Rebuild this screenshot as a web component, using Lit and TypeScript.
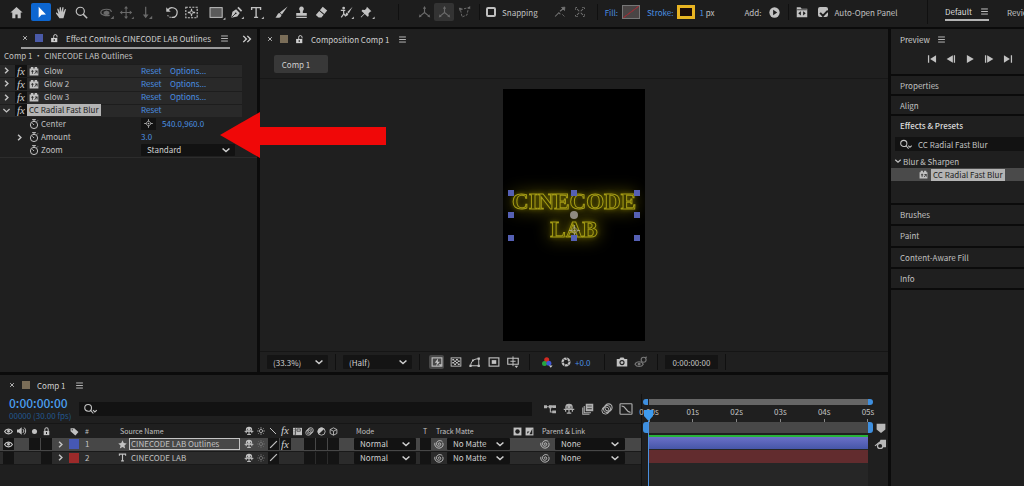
import { LitElement, html, svg, css } from "lit";
import { customElement, state } from "lit/decorators.js";

const glyphs: Record<string, unknown> = {
  home: svg`<path d="M8 2 1.5 8h2v6h3.3v-4h2.4v4h3.3V8h2z" fill="currentColor"/>`,
  arrow: svg`<path d="M4.5 1v13.500l3.500-3.700 5.500-.3z" fill="currentColor"/>`,
  hand: svg`<path d="M5.500 15 1.300 9.200c-.5-.9.600-1.600 1.300-.9l1.600 1.500L2.800 4c-.1-1 1.200-1.200 1.500-.2l1.300 4L5.700 2c0-1.100 1.500-1.100 1.600 0L7.900 7.500l1.100-5.500c.2-1 1.600-.8 1.500.2l-.4 5.700 1.900-3.700c.5-.9 1.700-.4 1.400.5l-1.700 5.900-1.300 4.400z" fill="currentColor"/>`,
  zoom: svg`<circle cx="6.500" cy="6.500" r="5" fill="none" stroke="currentColor" stroke-width="1.400"/><path d="m10 10 5 5" stroke="currentColor" stroke-width="1.800"/>`,
  orbit: svg`<path d="M12 11.500c-5 1-11-.6-11-3.500 0-2.500 3.500-4 7-4s6 1.500 6 3.500" fill="none" stroke="currentColor" stroke-width="1.500"/><path d="M4.500 7 8 5.500 11.500 7v3L8 11.500 4.500 10z" fill="currentColor"/><path d="m17 12v4h-4z" fill="currentColor"/>`,
  move: svg`<path d="M7.500 2v12M1.500 8h12" stroke="currentColor" stroke-width="1.300"/><path d="M7.500 0 10 3.200H5zM7.500 16 5 12.800h5zM-.3 8l3-2.400v4.800zM15 8l-3-2.400v4.800zM17 13v3h-3z" fill="currentColor"/>`,
  dolly: svg`<path d="M7 1v11" stroke="currentColor" stroke-width="1.500"/><path d="m7 15-3.500-4.500h7zM15 12v4h-4z" fill="currentColor"/>`,
  rotate: svg`<path d="M3.500 5.500A6 6 0 1 1 8 14" fill="none" stroke="currentColor" stroke-width="1.500"/><path d="M7 14a6 6 0 0 1-4.500-4" fill="none" stroke="currentColor" stroke-width="1.300" stroke-dasharray="1.500 1.500"/><path d="M1.500 1.500v5.500H7z" fill="currentColor"/>`,
  anchor: svg`<rect x="1" y="1.500" width="14" height="13" fill="none" stroke="currentColor" stroke-width="1.400" stroke-dasharray="2.500 1.500"/><circle cx="8" cy="8" r="2" fill="none" stroke="currentColor"/><path d="M8 3.500v3M8 9.500v3M3.500 8h3M9.500 8h3" stroke="currentColor" stroke-width="1.600"/>`,
  rect: svg`<rect x="0" y="2" width="15" height="12" fill="#5a5a5a" stroke="currentColor" stroke-width="1.200"/><path d="M19 14v3h-3z" fill="currentColor"/>`,
  pen: svg`<path d="M1.500 14.500 3 7l4.500-3 4.500 4.500L9 13z" fill="currentColor"/><path d="m9 2.500 1.500-1.500 4.500 4.500L13.500 7z" fill="currentColor"/><path d="m2 14 4.500-4.500" stroke="#1d1d1d"/><circle cx="7" cy="9" r="1.100" fill="#1d1d1d"/><path d="M17 13v3h-3z" fill="currentColor"/>`,
  type: svg`<path d="M2 5V2h11v3M7.500 2v12M5 14h5" fill="none" stroke="currentColor" stroke-width="1.700"/><path d="M17 13v3h-3z" fill="currentColor"/>`,
  textLayer: svg`<path d="M2.500 5V2h11v3M8 2v12M5.500 14h5" fill="none" stroke="currentColor" stroke-width="2"/>`,
  brush: svg`<path d="M15.500.5 6 8l2.500 2.500zM5.500 8.500C2.500 8.500 3.500 12 .5 14c3.500 1 7 .5 7.500-3z" fill="currentColor"/>`,
  stamp: svg`<path d="M8 .5a3 3 0 0 1 2.500 4.500C9.500 6.500 9.500 7.500 9.700 8.500h4.800V12h-13V8.500h4.800C6.500 7.500 6.500 6.500 5.500 5A3 3 0 0 1 8 .5zM1.500 13.300h13v1.400h-13z" fill="currentColor"/>`,
  eraser: svg`<path d="m9.500 1 5.500 4.500-3.500 4.200L6 5.200zM5.200 6.200l5.500 4.500-2.800 3.500H4.500L1 11z" fill="currentColor"/>`,
  roto: svg`<circle cx="4.500" cy="2.500" r="1.700" fill="currentColor"/><path d="M1 5.500h5.500M4.500 5v5l-3 4M5 9.500 7 13" stroke="currentColor" stroke-width="1.500" fill="none"/><path d="M15.500 1 9 7.500l1.700 1.700zM8.500 8c-1.500.5-1.500 3-3 4 2 .5 4.500 0 4.700-2.300zM17 13v3h-3z" fill="currentColor"/>`,
  pin: svg`<path d="m8.500 1 5.500 5.500-1.500.7-2 2 .2 3-1.300 1L5.800 9.800l-4.300 4.400-.7-.7 4.400-4.300L1.800 6l1.200-1.300 3 .2 2-2zM18 13v3h-3z" fill="currentColor"/>`,
  axis: svg`<path d="M8 8V2M8 8l-5.500 4.500M8 8l5.500 4.500" stroke="currentColor" stroke-width="1.400"/><path d="M8 0 6 3.500h4zM1 14l1-4 2.500 3zM15 14l-1-4-2.500 3z" fill="currentColor"/>`,
  axisView: svg`<path d="M3 4.500 13 2l-2 9-6 2.500z" fill="none" stroke="currentColor" stroke-width="1.200" stroke-dasharray="3 1.500"/><path d="m1 2 4 .5L2 6zM15 0v4l-3-2z" fill="currentColor"/>`,
  snapEdge: svg`<path d="m1.500 14 5-5 2 2M8 7l5-4" stroke="currentColor" stroke-width="1.400" fill="none"/><path d="M14.500 1.500 14 6l-4-4zM11 11l3 3" fill="currentColor" stroke="currentColor"/>`,
  snapBox: svg`<path d="M2 5V2h3M11 2h3v3M14 11v3h-3M5 14H2v-3" fill="none" stroke="currentColor" stroke-width="1.200" stroke-dasharray="2 1"/><path d="m4 4 3 3m2 2 3 3m0-8L9 7m-2 2-3 3" stroke="currentColor" stroke-width="1.400"/>`,
  add: svg`<circle cx="8" cy="8" r="7.500" fill="currentColor"/><path d="M6 4v8l6-4z" fill="#1d1d1d"/>`,
  folder: svg`<path d="M1 1.500h5L7.500 3.500H15V15H1z" fill="currentColor"/><path d="M1.500 5h13" stroke="#1d1d1d"/><path d="M6.500 7v5.500L3 9.800zM9.500 7v5.500L13 9.800z" fill="#1d1d1d"/>`,
  lock: svg`<path d="M3 7h10v7.500H3z" fill="currentColor"/><path d="M5 7V4.500a3 3 0 0 1 6 0V7" fill="none" stroke="currentColor" stroke-width="1.800"/><path d="M8 9v3.500" stroke="#1f1f1f" stroke-width="1.800"/>`,
  unlock: svg`<path d="M2 7h11v7.500H2z" fill="currentColor"/><path d="M6.500 7V4a3 3 0 0 1 6 0v2" fill="none" stroke="currentColor" stroke-width="1.700"/><path d="M7.500 9v3.500" stroke="#1f1f1f" stroke-width="1.800"/>`,
  menu: svg`<path d="M2 3.500h12M2 8h12M2 12.500h12" stroke="currentColor" stroke-width="1.500"/>`,
  close: svg`<path d="m3 3 10 10M13 3 3 13" stroke="currentColor" stroke-width="2.200"/>`,
  more: svg`<path d="m2 3 5 5-5 5M8.500 3l5 5-5 5" fill="none" stroke="currentColor" stroke-width="2.200"/>`,
  right: svg`<path d="m5.500 3 5 5-5 5" fill="none" stroke="currentColor" stroke-width="2.600"/>`,
  down: svg`<path d="m2.500 5.500 5.500 5 5.500-5" fill="none" stroke="currentColor" stroke-width="2.400"/>`,
  preset: svg`<path d="M1 4h2V1.500h4V4h2V1.500h4V4h2v11H1z" fill="currentColor"/><path d="M3.500 8.500h4M5.500 6.500v6M9 12.500l4-5M9.500 8h3.500v4" stroke="#262626" stroke-width="1.300" fill="none"/>`,
  watch: svg`<circle cx="8" cy="9.500" r="5.800" fill="none" stroke="currentColor" stroke-width="1.600"/><path d="M5 1h6M8 1v3M8 9.500 5.500 7M12.500 4 14 2.500" stroke="currentColor" stroke-width="1.600"/>`,
  target: svg`<path d="m8 3 5 5-5 5-5-5z" fill="none" stroke="currentColor" stroke-width="1.300"/><circle cx="8" cy="8" r="1.500" fill="currentColor"/><path d="M8 0v5M8 11v5M0 8h5M11 8h5" stroke="currentColor" stroke-width="1.200"/>`,
  search: svg`<circle cx="5.500" cy="6.500" r="4.500" fill="none" stroke="currentColor" stroke-width="1.500"/><path d="m8.500 9.500 4 4.500M12 9.500l2.500 2.500L17 9.500" fill="none" stroke="currentColor" stroke-width="1.500"/>`,
  first: svg`<path d="M2.500 2v12" stroke="currentColor" stroke-width="2"/><path d="M14.500 2v12L5 8z" fill="currentColor"/>`,
  back: svg`<path d="M13.500 2v12" stroke="currentColor" stroke-width="2"/><path d="M11 2v12L1 8z" fill="currentColor"/>`,
  play: svg`<path d="M3 1.500v13L14 8z" fill="currentColor"/>`,
  next: svg`<path d="M2.500 2v12" stroke="currentColor" stroke-width="2"/><path d="M5 2v12l10-6z" fill="currentColor"/>`,
  last: svg`<path d="M13.500 2v12" stroke="currentColor" stroke-width="2"/><path d="M1.500 2v12L11 8z" fill="currentColor"/>`,
  fast: svg`<rect x="1.500" y="2.500" width="13" height="11" fill="none" stroke="currentColor" stroke-width="1.500"/><path d="M9.500 3 5 9h3l-1.500 4.500L12 7.500H9z" fill="currentColor"/><path d="m10 11 2.500 2.500L15 11z" fill="currentColor"/>`,
  checker: svg`<rect x="1.500" y="2.500" width="13" height="11" fill="none" stroke="currentColor" stroke-width="1.200"/><path d="M3 4h2.500v2H3zM8 4h2.500v2H8zM5.500 6H8v2H5.500zM10.500 6H13v2h-2.500zM3 8h2.500v2H3zM8 8h2.500v2H8zM5.500 10H8v2H5.500zM10.500 10H13v2h-2.500z" fill="currentColor"/>`,
  mask: svg`<path d="M2 13C3 8 5 4 13 3.500V13z" fill="none" stroke="currentColor" stroke-width="1.300"/><path d="M.5 11.500h3v3h-3zM11.500 2h3v3h-3zM11.500 11.500h3v3h-3zM4 4.500h2.500V7H4z" fill="currentColor"/>`,
  region: svg`<rect x="1.500" y="2.500" width="13" height="11" fill="none" stroke="currentColor" stroke-width="1.500"/><path d="M5 5.500h6v5H5z" fill="currentColor"/>`,
  guides: svg`<path d="M1 3h14v8H1z" fill="none" stroke="currentColor" stroke-width="1.500"/><path d="M8 .5v13M4.500 7h7" stroke="currentColor" stroke-width="1.300"/><path d="M10 13h5l-2.500 3z" fill="currentColor"/>`,
  rgb: svg`<circle cx="7.500" cy="4.500" r="4" fill="#d22a22"/><circle cx="4" cy="10.500" r="4" fill="#27a540"/><circle cx="11" cy="10" r="4" fill="#3f55d8"/><path d="M11 13.500h6L14 17z" fill="#ccc"/>`,
  aperture: svg`<circle cx="8" cy="8" r="5.500" fill="none" stroke="currentColor" stroke-width="3.500"/><path d="m8 0 2.500 5M15.500 6l-5 2.500M13 14l-3.500-3.500M5 15.500 6.500 10.500M.5 9.500 5.500 8M3 2.500l4 3" stroke="#1f1f1f" stroke-width="1.100"/>`,
  camera: svg`<path d="M1 4h3.500L6 2h4l1.500 2H15v10H1z" fill="currentColor"/><circle cx="8" cy="8.800" r="2.700" fill="none" stroke="#1f1f1f" stroke-width="1.500"/>`,
  show: svg`<path d="M0 11c2-4.500 9-4.500 11 0-2 4-9 4-11 0z" fill="none" stroke="currentColor" stroke-width="1.500"/><circle cx="5.500" cy="10.700" r="2" fill="currentColor"/><circle cx="11.500" cy="5" r="3.300" fill="none" stroke="currentColor" stroke-width="1.500"/><path d="m13.500 3 2-2" stroke="currentColor" stroke-width="1.500"/>`,
  eye: svg`<path d="M1 8c3-5.500 11-5.500 14 0-3 5.500-11 5.500-14 0z" fill="none" stroke="currentColor" stroke-width="2"/><circle cx="8" cy="7.500" r="2.500" fill="currentColor"/>`,
  audio: svg`<path d="M0 5.500h3L7.500 2v12L3 10.500H0z" fill="currentColor"/><path d="M9.500 5a4 4 0 0 1 0 6M11.500 2.500a7.500 7.500 0 0 1 0 11" fill="none" stroke="currentColor" stroke-width="1.600"/>`,
  dot: svg`<circle cx="8" cy="8" r="4.500" fill="currentColor"/>`,
  tag: svg`<path d="M1 2h6.500L15 9l-5.500 6L1 7.500z" fill="currentColor"/><circle cx="4" cy="5" r="1.200" fill="#1f1f1f"/>`,
  shy: svg`<path d="M3 7.500V5.500a5 4.500 0 0 1 10 0v2z" fill="currentColor"/><path d="M5.500 4.500v2M10.500 4.500v2" stroke="#1f1f1f"/><path d="M1 8.500h14M8 8v6M5 13.500h6M3.500 8v3.500M12.500 8v3.500" stroke="currentColor" stroke-width="1.600"/>`,
  sun: svg`<circle cx="8" cy="8" r="3.200" fill="none" stroke="currentColor" stroke-width="1.600"/><path d="M8 0v3.500M8 12.500V16M0 8h3.500M12.500 8H16M2.500 2.500l1.500 1.500M12 12l1.500 1.500M13.500 2.500 12 4M4 12l-1.500 1.500" stroke="currentColor" stroke-width="1.300"/>`,
  slope: svg`<path d="m2 2 12 12" stroke="currentColor" stroke-width="2"/>`,
  line: svg`<path d="M2 14 14 2" stroke="currentColor" stroke-width="2.200"/>`,
  film: svg`<path d="M0 1.500h16v13H0z" fill="currentColor"/><path d="M4.500 2v12M2 4v1.500M2 8v1.500M2 12v1.500M7 7.500h6v-4H7z" stroke="#333" stroke-width="1.300" fill="none"/>`,
  blur: svg`<circle cx="10" cy="6" r="4.800" fill="none" stroke="currentColor" stroke-width="1.500"/><circle cx="8" cy="8" r="4.800" fill="none" stroke="currentColor" stroke-width="1.300"/><circle cx="6" cy="10" r="4.800" fill="none" stroke="currentColor" stroke-width="1.300"/>`,
  half: svg`<circle cx="8" cy="8" r="6.500" fill="none" stroke="currentColor" stroke-width="1.500"/><path d="M12.600 3.400A6.500 6.500 0 1 0 3.400 12.600z" fill="currentColor"/>`,
  cube: svg`<path d="m8 1.500 6 3v7l-6 3-6-3v-7zM2 4.500l6 3 6-3M8 7.500v7" fill="none" stroke="currentColor" stroke-width="1.500"/>`,
  spiral: svg`<path d="M8.500 8.500C7 9.500 6 7.500 7.500 6.500 10 5 12 8 10 10.500 7.500 13 3.500 11 4 7 4.500 2.500 10.500 1 13.500 4.500M1.500 6C0 11 4.500 15.500 9.500 14.500 14 13.500 15.500 9.500 14 6" fill="none" stroke="currentColor" stroke-width="1.500"/>`,
  matteA: svg`<path d="M1 1h14v14H1z" fill="currentColor"/><circle cx="8" cy="8" r="4" fill="#1f1f1f"/>`,
  matteB: svg`<path d="M1 1h14v14H1z" fill="currentColor"/><path d="M13 3v10H8zM4 12l4-4h-4z" fill="#1f1f1f"/>`,
  star: svg`<path d="m8 .5 2.200 5 5.300.5-4 3.700 1.200 5.500L8 12.300l-4.700 2.900 1.200-5.500L.5 6l5.300-.5z" fill="currentColor"/>`,
  flow: svg`<path d="M1 5h6M7 4.500h5M8.500 6v6H12" fill="none" stroke="currentColor" stroke-width="1.500"/><path d="M0 3h4v4H0zM11 3h5v3.500h-5zM11 10h5v3.500h-5zM6.500 3h4v4h-4z" fill="currentColor"/>`,
  frames: svg`<path d="M5 1h10v10H5z" fill="currentColor"/><path d="M3 4v9h9M1 6v9h9" fill="none" stroke="currentColor" stroke-width="1.400"/><path d="M7 4h6M7 7.500h6" stroke="#555" stroke-width="1.400"/>`,
  graph: svg`<rect x="0" y="1" width="16" height="14" rx="1" fill="none" stroke="currentColor" stroke-width="1.500"/><path d="M2 4c7 0 5 8 12 8.500" fill="none" stroke="currentColor" stroke-width="1.500"/>`,
  shield: svg`<path d="M1 1h14v9.500L8 16l-7-5.500z" fill="currentColor"/>`,
  reveal: svg`<path d="M8 1h8v11h-4L6 6z" fill="currentColor"/><path d="M0 10 7 4.500" stroke="currentColor" stroke-width="1.800"/><circle cx="7.500" cy="10" r="3.800" fill="#1f1f1f" stroke="currentColor" stroke-width="1.800"/>`,
};

const icon = (name: string, size = 12) =>
  html`<svg class="icon" width=${size} height=${size} viewBox="0 0 16 16" aria-hidden="true">${glyphs[name]}</svg>`;

interface Layer {
  id: number;
  name: string;
  kind: "shape" | "text";
  color: string;
  visible: boolean;
  fx: boolean;
}

@customElement("app-root")
export class AppRoot extends LitElement {
  @state() private selectedTool = "Selection";

  private toolGroups = [
    { dim: false, tools: [["Selection", "arrow"], ["Hand", "hand"], ["Zoom", "zoom"]] },
    { dim: true, tools: [["Orbit", "orbit"], ["Pan", "move"], ["Dolly", "dolly"]] },
    { dim: false, tools: [["Rotation", "rotate"], ["Pan Behind", "anchor"]] },
    { dim: false, tools: [["Rectangle", "rect"], ["Pen", "pen"], ["Type", "type"]] },
    { dim: false, tools: [["Brush", "brush"], ["Clone Stamp", "stamp"], ["Eraser", "eraser"]] },
    { dim: false, tools: [["Roto Brush", "roto"], ["Puppet Pin", "pin"]] },
  ];

  private layers: Layer[] = [
    { id: 1, name: "CINECODE LAB Outlines", kind: "shape", color: "blue", visible: true, fx: true },
    { id: 2, name: "CINECODE LAB", kind: "text", color: "red", visible: false, fx: false },
  ];

  private seconds = ["0:00s", "01s", "02s", "03s", "04s", "05s"];

  static styles = css`
    :host {
      display: block;
      font: 8px/13px "Noto Sans CJK SC", "Open Sans", sans-serif;
      color: #c2c2c2;
      background: #0b0b0b;
    }
    * { box-sizing: border-box; }
    button, input, select { font: inherit; color: inherit; background: none; border: 0; padding: 0; margin: 0; }
    button { display: inline-flex; align-items: center; justify-content: center; }
    a { color: #4a90e2; text-decoration: none; }
    h2 { font: inherit; margin: 0; white-space: nowrap; }
    .icon { display: block; flex: none; overflow: visible; }
    .app { display: flex; flex-direction: column; gap: 2px; min-height: 100vh; overflow: hidden; position: relative; }
    .panel { background: #1f1f1f; min-width: 0; }
    .blue { color: #4a90e2; }

    .toolbar { display: flex; align-items: center; height: 27px; padding: 0 0 3px 6px; background: #1d1d1d; white-space: nowrap; overflow: hidden; }
    .group { display: flex; flex: none; margin-left: 5px; }
    .group.dim { color: #6a6a6a; }
    .tool { width: 20px; height: 18px; flex: none; color: inherit; }
    .tool.on { background: #0d66d0; color: #fff; border-radius: 2px; }
    .tool.soft { background: #333; border-radius: 2px; }
    .rule { width: 1px; height: 16px; background: #101010; flex: none; }
    .options { display: flex; align-items: center; flex: none; margin-left: 22px; }
    .options > .dim { display: flex; color: #6a6a6a; margin: 0 5px 0 15px; }
    .snap { display: flex; margin: 0 7px 0 12px; }
    .snapping { margin-left: 6px; }
    .check { display: flex; align-items: center; gap: 6px; }
    .check input { appearance: none; width: 10px; height: 10px; border: 2px solid #c0c0c0; border-radius: 2px; display: grid; place-items: center; }
    .check input:checked { background: #c0c0c0; }
    .check input:checked::before { content: ""; width: 6px; height: 3px; border: solid #1d1d1d; border-width: 0 0 2px 2px; transform: rotate(-45deg); }
    .paint { display: flex; align-items: center; gap: 4px; margin-left: 7px; }
    .swatch { width: 18px; height: 14px; border: 1px solid #777; }
    .swatch.none { background: linear-gradient(to bottom right, #4a4545 46%, #8e3038 48%, #8e3038 52%, #4a4545 54%); }
    .swatch.yellow { border: 3px solid #e8b422; background: #1b0c08; }
    .add { display: flex; align-items: center; gap: 8px; margin: 0 8px 0 30px; }
    .auto { display: flex; align-items: center; gap: 10px; margin: 0 24px 0 7px; }
    .workspaces { display: flex; align-items: center; align-self: stretch; gap: 18px; margin-left: auto; padding-left: 17px; border-left: 1px solid #101010; width: 97px; flex: none; overflow: hidden; }
    .current { display: flex; align-items: center; gap: 8px; border-bottom: 2px solid #b4b4b4; height: 18px; color: #dcdcdc; }

    .body { display: grid; grid-template-columns: minmax(0, 1fr) 133px; gap: 3px; flex: 1; }
    .left { display: grid; grid-template-columns: 257px minmax(0, 1fr); grid-template-rows: minmax(343px, 1fr) 111px; gap: 3px; }
    .tabs { display: flex; height: 20px; align-items: center; color: #cfcfcf; }
    .tab { display: flex; align-items: center; gap: 7px; height: 19px; padding: 0 1px; }
    .tab h2 { margin-right: 2px; }
    .chip { width: 8px; height: 8px; background: #7a6d58; flex: none; }
    .chip.blue-chip { background: #4a5aa8; }

    .effects .tabs { padding-left: 21px; justify-content: space-between; padding-right: 5px; }
    .effects .tab { border-bottom: 2px solid #9a9a9a; }
    .path { padding: 0 4px; height: 15px; }
    .props { display: grid; grid-template-rows: repeat(7, 1fr); height: 94px; line-height: 12px; border-bottom: 1px solid #2c2c2c; }
    .fx-row { display: grid; grid-template-columns: 13px 12px minmax(0, 1fr) 29px 72px; align-items: center; margin-right: 15px; padding-left: 2px; }
    .fx-row.fx { background: #292929; box-shadow: inset 0 1px #1d1d1d; }
    .fx-row.param { grid-template-columns: 13px 12px minmax(0, 1fr) 101px; }
    .fx-mark { font: italic 11px/12px "Liberation Serif", serif; color: #d0d0d0; background: #111; text-align: center; }
    .fx-name { display: flex; align-items: center; gap: 5px; padding-left: 2px; }
    .param .fx-name { gap: 2px; }
    .picked { background: #b4b4b4; color: #1c1c1c; line-height: 12px; padding: 0 2px; justify-self: start; white-space: nowrap; }
    .value { display: flex; align-items: center; gap: 6px; }
    .value input { width: 60px; height: 12px; color: #4a90e2; }
    .aim { width: 15px; height: 12px; background: #121212; }
    .pick { display: grid; align-items: center; background: #121212; color: #d0d0d0; border-radius: 1px; }
    .pick > * { grid-area: 1 / 1; }
    .pick select { appearance: none; width: 100%; height: 12px; padding: 0 6px; outline-offset: -1px; }
    .pick .icon { justify-self: end; margin-right: 4px; pointer-events: none; }
    .zoomed { width: 94px; }

    .comp { display: grid; grid-template-rows: 20px 30px minmax(0, 1fr) 21px; }
    .comp .tabs { padding-left: 6px; }
    .timeline .tabs { padding-left: 8px; }
    .crumbs { padding: 6px 14px; border-bottom: 1px solid #171717; }
    .crumb { width: 54px; height: 18px; background: #383838; color: #d0d0d0; border-radius: 2px; padding-right: 10px; }
    .stage { display: grid; place-items: center; }
    .artboard { width: 142px; height: 252px; background: #000; display: grid; place-items: center; overflow: hidden; }
    .title { padding-top: 2px; font: bold 23px/28px "Liberation Serif", serif; color: #3b3800; -webkit-text-stroke: 1px #a59c14; filter: drop-shadow(0 0 2px #5c5600) drop-shadow(0 0 8px #5c5500); white-space: nowrap; display: flex; flex-direction: column; align-items: center; }
    .art { display: grid; place-items: center; }
    .art > * { grid-area: 1 / 1; }
    .pivot { color: #a8a48c; padding-top: 30px; z-index: 1; }
    .handles { display: grid; grid-template-columns: repeat(3, 6px); grid-template-rows: repeat(3, 6px); justify-content: space-between; align-content: space-between; width: 132px; height: 51px; z-index: 1; }
    .handles i { background: #5560b4; }
    .handles i.mid { background: #8f8a80; border-radius: 50%; width: 8px; height: 8px; margin: -1px; }
    .viewbar { display: flex; align-items: center; border-top: 1px solid #151515; padding-left: 7px; overflow: hidden; }
    .viewbar .pick { background: #141414; height: 14px; }
    .mag { width: 61px; }
    .res { width: 69px; }
    .viewbar .rule { margin: 0 7px; }
    .viewbar .tool { width: 19px; height: 14px; }
    .viewbar .tool.lit { width: 15px; background: #484848; border-radius: 2px; margin: 0 2px; }
    .faded { color: #777; }
    .expo { width: 22px; }
    .time { width: 53px; height: 14px; background: #141414; }

    .side { display: grid; grid-template-rows: 45px 18px 18px 87px 83px 1fr; gap: 2px; background: #0b0b0b; overflow: hidden; white-space: nowrap; }
    .side h2 { padding-left: 9px; }
    .section { display: flex; align-items: center; background: #1f1f1f; }
    .stack { display: grid; grid-template-rows: repeat(4, 1fr); gap: 2px; }
    .preview h2 { display: flex; align-items: center; gap: 7px; height: 20px; color: #cfcfcf; }
    .transport { display: flex; gap: 7px; padding-left: 35px; height: 19px; align-items: center; }
    .transport button { width: 12px; }
    .presets h2 { color: #dcdcdc; font-weight: 500; height: 21px; line-height: 20px; }
    .find { display: flex; align-items: center; gap: 7px; background: #121212; height: 14px; margin-left: 4px; padding-left: 5px; }
    .find input { flex: 1; min-width: 0; height: 13px; }
    .folder { display: flex; align-items: center; gap: 1px; height: 17px; padding: 3px 0 0 3px; }
    .hit { display: flex; align-items: center; gap: 3px; height: 13px; background: #4a4a4a; padding-left: 28px; }

    .timeline { grid-column: 1 / -1; display: grid; grid-template-rows: 19px minmax(0, 1fr); }
    .tl-body { display: grid; grid-template-columns: 641px minmax(0, 1fr); }
    .tl-tools { display: flex; align-items: center; height: 29px; padding-left: 9px; }
    .clock { width: 70px; color: #4a9ef0; }
    .clock strong { display: block; font-size: 12px; line-height: 14px; font-weight: 500; }
    .clock small { display: block; font-size: 8px; line-height: 11px; color: #22588f; white-space: nowrap; }
    .tl-tools .find { width: 453px; margin: 0; }
    .tl-icons { display: flex; margin-left: 8px; color: #b0b0b0; }
    .tl-icons button { width: 19px; }

    table { table-layout: fixed; width: 641px; border-collapse: collapse; }
    th, td { padding: 0; font-weight: 400; text-align: left; white-space: nowrap; }
    th { height: 14px; font-size: 7px; line-height: 13px; border-top: 1px solid #161616; }
    th .icon, td .icon { margin: 0 auto; }
    td { height: 13px; line-height: 12px; border-bottom: 1px solid #191919; background: #2b2b2b; }
    tr.sel td { background: #474747; }
    .c16 { width: 16px; } .c12 { width: 12px; } .c35 { width: 35px; } .c128 { width: 128px; }
    .c80 { width: 80px; } .c26 { width: 26px; } .c104 { width: 104px; }
    .box { display: grid; place-items: center; width: 11px; height: 12px; margin: 0 auto; background: #141414; }
    .box .icon { margin: 0; }
    .tint { width: 10px; height: 10px; margin: 0 auto; }
    .tint.blue { background: #4658b4; }
    .tint.red { background: #9c2a2a; }
    .src { display: flex; align-items: center; gap: 2px; padding: 0 3px; }
    .src .icon { margin: 0; }
    .src span { flex: 1; line-height: 10px; border: 1px solid transparent; padding-left: 1px; }
    .sel .src span { border-color: #c4c4c4; }
    th.pad5, td.pad5 { padding-left: 5px; }
    th.pad17 { padding-left: 17px; }
    .heads { display: flex; gap: 3px; padding-left: 2px; }
    .heads .icon { margin: 0; }
    td .pick { height: 12px; }
    td .pick .icon { margin: 0 5px 0 0; }
    .mode { width: 62px; margin-left: 15px; }
    .link { display: flex; align-items: center; gap: 3px; padding-left: 3px; }
    .link .icon { margin: 0; }
    .matte { width: 63px; }
    .parent { width: 70px; }
    .link.wide { gap: 5px; }
    .fxs { font: italic 11px/12px "Liberation Serif", serif; color: #d0d0d0; }
    th.ctr { text-align: center; }

    .tracks { display: grid; grid-template-columns: minmax(0, 1fr) 20px; padding-left: 7px; border-left: 1px solid #121212; }
    .lanes { display: grid; grid-template-rows: 5px 6px 17px 11px 4px 12px 14px 1fr; background: linear-gradient(#1f1f1f 43px, #262626 43px); position: relative; }
    .nav { grid-row: 2; background: #666; display: flex; justify-content: space-between; }
    .cap { width: 5px; background: #3e8fdf; flex: none; }
    .cap.start { margin-left: -6px; border-radius: 3px 0 0 3px; }
    .cap.end { margin-right: -5px; border-radius: 0 3px 3px 0; }
    .ruler { grid-row: 3; display: flex; justify-content: space-between; line-height: 14px; }
    .ruler span { width: 0; display: flex; flex-direction: column; align-items: center; }
    .ruler span::after { content: ""; width: 1px; height: 3px; background: #888; }
    .work { grid-row: 4; background: #484848; display: flex; justify-content: space-between; }
    .cached { grid-row: 5; border-top: 2px solid #27b43a; margin-top: 2px; }
    .bar.blue { grid-row: 6; background: linear-gradient(#6a70c8, #4656a8); }
    .bar.red { grid-row: 7; background: #622c2e; margin-top: 1px; }
    .playhead { position: absolute; left: -5px; top: 16px; bottom: 0; width: 9px; display: flex; flex-direction: column; align-items: center; }
    .playhead::after { content: ""; flex: 1; width: 1px; background: #4a90e0; }
    .marks { display: flex; flex-direction: column; gap: 6px; align-items: flex-end; padding: 29px 2px 0 0; color: #b8b8b8; }
    .pointer { position: absolute; left: 220px; top: 112px; width: 166px; height: 46px; pointer-events: none; }
  `;

  private tool(label: string, name: string, cls = "", size = 13) {
    return html`<button class="tool ${cls}" aria-label=${label}>${icon(name, size)}</button>`;
  }

  private pick(label: string, value: string, cls: string, id = "") {
    return html`<span class="pick ${cls}">
      <select aria-label=${label} id=${id || label.replace(/\W/g, "-")}><option>${value}</option></select>${icon("down", 10)}
    </span>`;
  }

  private toolbar() {
    return html`<header class="toolbar">
      ${this.tool("Home", "home", "", 15)}
      ${this.toolGroups.map((g) => html`<div class="group ${g.dim ? "dim" : ""}">
        ${g.tools.map(([label, name]) => html`<button
          class="tool ${label === this.selectedTool ? "on" : ""}"
          aria-label=${label}
          @click=${() => (this.selectedTool = label)}>${icon(name, 13)}</button>`)}
      </div>`)}
      <div class="options">
        <i class="rule"></i>
        <div class="dim">${this.tool("Local Axis", "axis")}${this.tool("World Axis", "axis", "soft")}${this.tool("View Axis", "axisView")}</div>
        <i class="rule"></i>
        <label class="check snapping"><input type="checkbox" />Snapping</label>
        <div class="snap faded">${this.tool("Snap edges", "snapEdge", "", 12)}${this.tool("Snap features", "snapBox", "", 12)}</div>
        <i class="rule"></i>
        <div class="paint"><a href="#fill">Fill:</a><button class="swatch none" aria-label="Fill colour"></button></div>
        <div class="paint"><a href="#stroke">Stroke:</a><button class="swatch yellow" aria-label="Stroke colour"></button><span><span class="blue">1</span> px</span></div>
        <div class="add">Add: <button aria-label="Add">${icon("add", 11)}</button></div>
        <i class="rule"></i>
        <div class="auto"><button aria-label="Open panel">${icon("folder", 12)}</button>
          <label class="check"><input type="checkbox" checked />Auto-Open Panel</label></div>
      </div>
      <nav class="workspaces"><span class="current">Default ${icon("menu", 9)}</span><span>Review</span></nav>
    </header>`;
  }

  private effects() {
    return html`<section class="panel effects">
      <div class="tabs">
        <div class="tab">${icon("close", 6)}<i class="chip blue-chip"></i>${icon("unlock", 9)}<h2>Effect Controls CINECODE LAB Outlines</h2>${icon("menu", 9)}</div>
        <button aria-label="More tabs">${icon("more", 10)}</button>
      </div>
      <div class="path">Comp 1 • CINECODE LAB Outlines</div>
      <div class="props">
        ${["Glow", "Glow 2", "Glow 3"].map((name) => html`<div class="fx-row fx">
          ${icon("right", 9)}<span class="fx-mark">fx</span>
          <span class="fx-name">${icon("preset", 10)}${name}</span>
          <a href="#reset">Reset</a><a href="#options">Options...</a>
        </div>`)}
        <div class="fx-row fx">
          ${icon("down", 9)}<span class="fx-mark">fx</span><span class="picked">CC Radial Fast Blur</span><a href="#reset">Reset</a>
        </div>
        <div class="fx-row param">
          <span></span><span></span><label class="fx-name" for="center">${icon("watch", 10)}Center</label>
          <span class="value"><button class="aim" aria-label="Pick point">${icon("target", 9)}</button><input id="center" value="540.0,960.0" /></span>
        </div>
        <div class="fx-row param">
          <span></span>${icon("right", 9)}<label class="fx-name" for="amount">${icon("watch", 10)}Amount</label>
          <span class="value"><input id="amount" value="3.0" /></span>
        </div>
        <div class="fx-row param">
          <span></span><span></span><label class="fx-name" for="zoom-kind">${icon("watch", 10)}Zoom</label>
          ${this.pick("Zoom", "Standard", "zoomed", "zoom-kind")}
        </div>
      </div>
    </section>`;
  }

  private composition() {
    return html`<main class="panel comp">
      <div class="tabs"><div class="tab">${icon("close", 6)}<i class="chip"></i>${icon("unlock", 9)}<h2>Composition Comp 1</h2>${icon("menu", 9)}</div></div>
      <div class="crumbs"><button class="crumb">Comp 1</button></div>
      <div class="stage"><div class="artboard"><div class="art">
        <div class="title"><span>CINECODE</span><span>LAB</span></div>
        <div class="pivot">${icon("target", 11)}</div>
        <div class="handles"><i></i><i></i><i></i><i></i><i class="mid"></i><i></i><i></i><i></i><i></i></div>
      </div></div></div>
      <footer class="viewbar">
        ${this.pick("Magnification", "(33.3%)", "mag")}<i class="rule"></i>${this.pick("Resolution", "(Half)", "res")}<i class="rule"></i>
        ${this.tool("Fast previews", "fast", "lit", 12)}${this.tool("Transparency grid", "checker", "", 12)}${this.tool("Mask visibility", "mask", "", 12)}${this.tool("Region of interest", "region", "", 12)}${this.tool("Guides", "guides", "", 12)}
        <i class="rule"></i>${this.tool("Channels", "rgb", "", 10)}${this.tool("Reset exposure", "aperture", "", 10)}<a class="expo" href="#exposure">+0.0</a>
        <i class="rule"></i>${this.tool("Snapshot", "camera", "", 12)}${this.tool("Show snapshot", "show", "faded", 12)}
        <i class="rule"></i><button class="time">0:00:00:00</button><i class="rule"></i>
      </footer>
    </main>`;
  }

  private sidebar() {
    return html`<aside class="side">
      <section class="panel preview"><h2>Preview ${icon("menu", 9)}</h2>
        <div class="transport">${["first", "back", "play", "next", "last"].map((n) => html`<button aria-label=${n}>${icon(n, 10)}</button>`)}</div>
      </section>
      <section class="section"><h2>Properties</h2></section>
      <section class="section"><h2>Align</h2></section>
      <section class="panel presets"><h2>Effects &amp; Presets</h2>
        <label class="find">${icon("search", 11)}<input aria-label="Search effects" value="CC Radial Fast Blur" /></label>
        <div class="folder">${icon("down", 8)}Blur &amp; Sharpen</div>
        <div class="hit">${icon("preset", 9)}<span class="picked">CC Radial Fast Blur</span></div>
      </section>
      <div class="stack">${["Brushes", "Paint", "Content-Aware Fill", "Info"].map((t) => html`<section class="section"><h2>${t}</h2></section>`)}</div>
      <div class="panel"></div>
    </aside>`;
  }

  private layerRow(l: Layer) {
    const box = (inner: unknown = "") => html`<span class="box">${inner}</span>`;
    return html`<tr class=${l.id === 1 ? "sel" : ""}>
      <td>${box(l.visible ? icon("eye", 9) : "")}</td>
      <td></td>
      <td>${l.visible ? box() : ""}</td>
      <td>${box()}</td>
      <td>${icon("right", 9)}</td>
      <td><div class="tint ${l.color}"></div></td>
      <td class="pad5">${l.id}</td>
      <td><div class="src">${icon(l.kind === "shape" ? "star" : "textLayer", 9)}<span>${l.name}</span></div></td>
      <td>${icon("shy", 10)}</td>
      <td class="faded">${icon("sun", 8)}</td>
      <td>${box(icon("line", 9))}</td>
      <td>${l.fx ? box(html`<span class="fxs">fx</span>`) : ""}</td>
      <td></td>
      <td>${box()}</td><td>${box()}</td><td>${box()}</td>
      <td>${this.pick(`Mode ${l.id}`, "Normal", "mode")}</td>
      <td>${box()}</td>
      <td><div class="link">${icon("spiral", 10)}${this.pick(`Track Matte ${l.id}`, "No Matte", "matte")}</div></td>
      <td></td>
      <td><div class="link wide">${icon("spiral", 10)}${this.pick(`Parent ${l.id}`, "None", "parent")}</div></td>
    </tr>`;
  }

  private timeline() {
    const cols = ["c16", "c12", "c12", "c12", "c16", "c12", "c35", "c128", ...Array(8).fill("c12"), "c80", "c12", "c80", "c26", "c104"];
    return html`<section class="panel timeline">
      <div class="tabs"><div class="tab">${icon("close", 6)}<i class="chip"></i><h2>Comp 1</h2>${icon("menu", 9)}</div></div>
      <div class="tl-body">
        <div>
          <div class="tl-tools">
            <div class="clock"><strong>0:00:00:00</strong><small>00000 (30.00 fps)</small></div>
            <label class="find">${icon("search", 12)}<input aria-label="Search layers" /></label>
            <div class="tl-icons">${[["Flowchart", "flow"], ["Hide shy", "shy"], ["Frame blending", "frames"], ["Motion blur", "blur"], ["Graph editor", "graph"]].map(([l, n]) => html`<button aria-label=${l}>${icon(n, 12)}</button>`)}</div>
          </div>
          <table>
            <colgroup>${cols.map((c) => html`<col class=${c} />`)}</colgroup>
            <thead><tr>
              <th>${icon("eye", 9)}</th><th>${icon("audio", 10)}</th><th>${icon("dot", 9)}</th><th>${icon("lock", 9)}</th>
              <th></th><th>${icon("tag", 9)}</th><th class="pad5">#</th><th class="pad5">Source Name</th>
              <th>${icon("shy", 10)}</th><th>${icon("sun", 8)}</th><th>${icon("slope", 8)}</th><th class="ctr"><span class="fxs">fx</span></th>
              <th>${icon("film", 9)}</th><th>${icon("blur", 9)}</th><th>${icon("half", 9)}</th><th>${icon("cube", 9)}</th>
              <th class="pad17">Mode</th><th class="ctr">T</th><th class="pad5">Track Matte</th>
              <th><div class="heads">${icon("matteA", 9)}${icon("matteB", 9)}</div></th><th class="pad5">Parent &amp; Link</th>
            </tr></thead>
            <tbody>${this.layers.map((l) => this.layerRow(l))}</tbody>
          </table>
        </div>
        <div class="tracks">
          <div class="lanes">
            <div class="nav"><i class="cap start"></i><i class="cap end"></i></div>
            <div class="ruler">${this.seconds.map((s) => html`<span>${s}</span>`)}</div>
            <div class="work"><i class="cap start"></i><i class="cap end"></i></div>
            <div class="cached"></div>
            ${this.layers.map((l) => html`<div class="bar ${l.color}"></div>`)}
            <div class="playhead"><svg width="9" height="11" viewBox="0 0 9 11"><path d="M0 0h9v6L4.500 11 0 6z" fill="#3e9bee"/></svg></div>
          </div>
          <div class="marks">${icon("shield", 10)}${icon("reveal", 11)}</div>
        </div>
      </div>
    </section>`;
  }

  render() {
    return html`<div class="app">
      ${this.toolbar()}
      <div class="body">
        <div class="left">${this.effects()}${this.composition()}${this.timeline()}</div>
        ${this.sidebar()}
      </div>
      <svg class="pointer" viewBox="0 0 166 46" aria-hidden="true"><path d="M0 23 40 0v15h126v18H40v13z" fill="#f00808"/></svg>
    </div>`;
  }
}
